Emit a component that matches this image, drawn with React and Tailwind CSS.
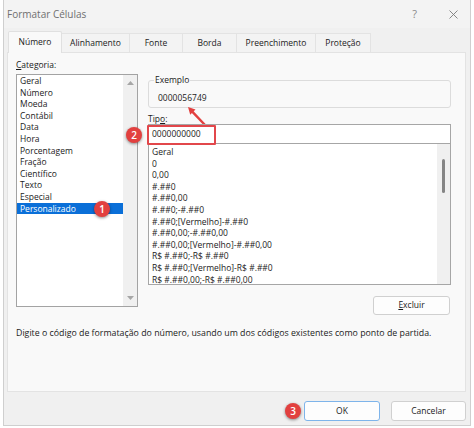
const categories = [
  'Geral',
  'Número',
  'Moeda',
  'Contábil',
  'Data',
  'Hora',
  'Porcentagem',
  'Fração',
  'Científico',
  'Texto',
  'Especial',
  'Personalizado',
]

const formats = [
  'Geral',
  '0',
  '0,00',
  '#.##0',
  '#.##0,00',
  '#.##0;-#.##0',
  '#.##0;[Vermelho]-#.##0',
  '#.##0,00;-#.##0,00',
  '#.##0,00;[Vermelho]-#.##0,00',
  'R$ #.##0;-R$ #.##0',
  'R$ #.##0;[Vermelho]-R$ #.##0',
  'R$ #.##0,00;-R$ #.##0,00',
]

const tabs = [
  { label: 'Número', w: 'w-[54px]', active: true },
  { label: 'Alinhamento', w: 'w-[68px]' },
  { label: 'Fonte', w: 'w-[53px]' },
  { label: 'Borda', w: 'w-[54px]' },
  { label: 'Preenchimento', w: 'w-[79px]' },
  { label: 'Proteção', w: 'w-[55px]' },
]

function Badge({ n, className }) {
  return (
    <span
      className={`absolute flex h-4 w-4 items-center justify-center rounded-full bg-[#e2403f] text-[10px] font-semibold leading-none text-white shadow-[0_1px_3px_rgba(0,0,0,0.45)] ${className}`}
    >
      {n}
    </span>
  )
}

export default function App() {
  return (
    <div className="h-[428px] w-[474px] bg-white px-[3px] font-['Open_Sans','Noto_Sans',sans-serif] text-[8.5px] text-[#1b1b1b]">
      <div className="flex h-[426px] flex-col border-x border-b border-[#cfcfcf] bg-[#f0f0f0]">
        {/* title bar */}
        <div className="flex h-[28px] shrink-0 items-center bg-[#f3f3f3] pl-[3px]">
          <span className="text-[10px] text-[#6f6f6f]">Formatar Células</span>
          <span className="ml-auto text-[11px] text-[#8a8a8a]">?</span>
          <svg className="ml-[32px] mr-[12px] h-[9px] w-[9px]" viewBox="0 0 9 9">
            <path d="M0.5 0.5L8.5 8.5M8.5 0.5L0.5 8.5" stroke="#7a7a7a" strokeWidth="0.9" />
          </svg>
        </div>

        {/* tabs */}
        <div className="relative z-10 -mb-px flex shrink-0 items-end pl-[4px] pt-[3px]">
          {tabs.map((t) =>
            t.active ? (
              <div
                key={t.label}
                className={`${t.w} flex h-[22px] items-center justify-center rounded-t-[2px] border-x border-t border-[#e0e0e0] bg-[#f9f9f9]`}
              >
                {t.label}
              </div>
            ) : (
              <div
                key={t.label}
                className={`${t.w} flex h-[20px] items-center justify-center border-b border-r border-t border-[#e3e3e3] bg-[#f3f3f3]`}
              >
                {t.label}
              </div>
            )
          )}
        </div>

        {/* panel */}
        <div className="ml-[3px] mr-[4px] h-[340px] shrink-0 border border-[#e3e3e3] bg-[#f9f9f9] pl-[8px] pr-[14px] pt-[6px]">
          <div className="flex gap-[10px]">
            {/* category column */}
            <div className="flex w-[122px] flex-col">
              <div className="leading-[12px]">
                <span className="underline">C</span>ategoria:
              </div>
              <div className="mt-[3px] flex h-[233px] border border-[#a3a3a3] bg-white">
                <ul className="flex-1 leading-[11.6px]">
                  {categories.map((c) =>
                    c === 'Personalizado' ? (
                      <li key={c} className="relative bg-[#0a6fd8] pl-[3px] text-white">
                        {c}
                        <Badge n="1" className="left-[77px] -top-[2px]" />
                      </li>
                    ) : (
                      <li key={c} className="pl-[3px]">
                        {c}
                      </li>
                    )
                  )}
                </ul>
                <div className="flex w-[14px] flex-col items-center justify-between bg-[#f0f0f0] py-[6px]">
                  <svg width="7" height="4" viewBox="0 0 7 4">
                    <path d="M0 4L3.5 0L7 4Z" fill="#a6a6a6" />
                  </svg>
                  <svg width="7" height="4" viewBox="0 0 7 4">
                    <path d="M0 0L3.5 4L7 0Z" fill="#a6a6a6" />
                  </svg>
                </div>
              </div>
            </div>

            {/* type column */}
            <div className="relative flex w-[303px] flex-col">
              <fieldset className="mt-[15px] rounded-[3px] border border-[#dcdcdc] pl-[5px]">
                <legend className="px-[1px] leading-[12px]">Exemplo</legend>
                <div className="pb-[3px] pl-[4px] pt-[6px] leading-[12px]">0000056749</div>
              </fieldset>

              <svg
                className="absolute left-[32px] top-[41px] overflow-visible"
                width="30"
                height="30"
                viewBox="0 0 30 30"
              >
                <path d="M25 25L12.5 11.8" stroke="#e2403f" strokeWidth="2.4" strokeLinecap="round" />
                <path d="M8 7L15.5 9.6L10.2 14.7Z" fill="#e2403f" />
              </svg>

              <div className="mt-[5px] leading-[11px]">
                Tip<span className="underline">o</span>:
              </div>
              <div className="relative flex h-[20px] items-center border border-[#a6a6a6] bg-white pl-[3px]">
                0000000000
                <span className="absolute -left-[2px] top-0 h-[20px] w-[69px] rounded-[1px] border-2 border-[#e2474b]" />
                <Badge n="2" className="-left-[23px] top-[2px]" />
              </div>
              <div className="flex h-[141px] border-x border-b border-[#a6a6a6] bg-white">
                <ul className="flex-1 overflow-hidden pl-[3px] pt-[2px] leading-[11.6px]">
                  {formats.map((f) => (
                    <li key={f} className="whitespace-nowrap">
                      {f}
                    </li>
                  ))}
                </ul>
                <div className="flex w-[13px] justify-center bg-[#f0f0f0] pt-[15px]">
                  <div className="h-[34px] w-[3px] rounded-full bg-[#858585]" />
                </div>
              </div>

              <button className="mr-px mt-[11px] h-[19px] w-[77px] self-end rounded-[3px] border border-[#d0d0d0] bg-[#fdfdfd]">
                <span className="underline">E</span>xcluir
              </button>
            </div>
          </div>

          <p className="mt-[12px] text-[8.8px] leading-[12px]">
            Digite o código de formatação do número, usando um dos códigos existentes como ponto de partida.
          </p>
        </div>

        {/* footer */}
        <div className="flex justify-end pr-[4px] pt-[9px]">
          <button className="relative h-[20px] w-[76px] rounded-[3px] border border-[#7eb4ea] bg-[#fdfdfd]">
            OK
            <Badge n="3" className="-left-[20px] top-px" />
          </button>
          <button className="ml-[11px] h-[20px] w-[75px] rounded-[3px] border border-[#d0d0d0] bg-[#fdfdfd]">
            Cancelar
          </button>
        </div>
      </div>
    </div>
  )
}
